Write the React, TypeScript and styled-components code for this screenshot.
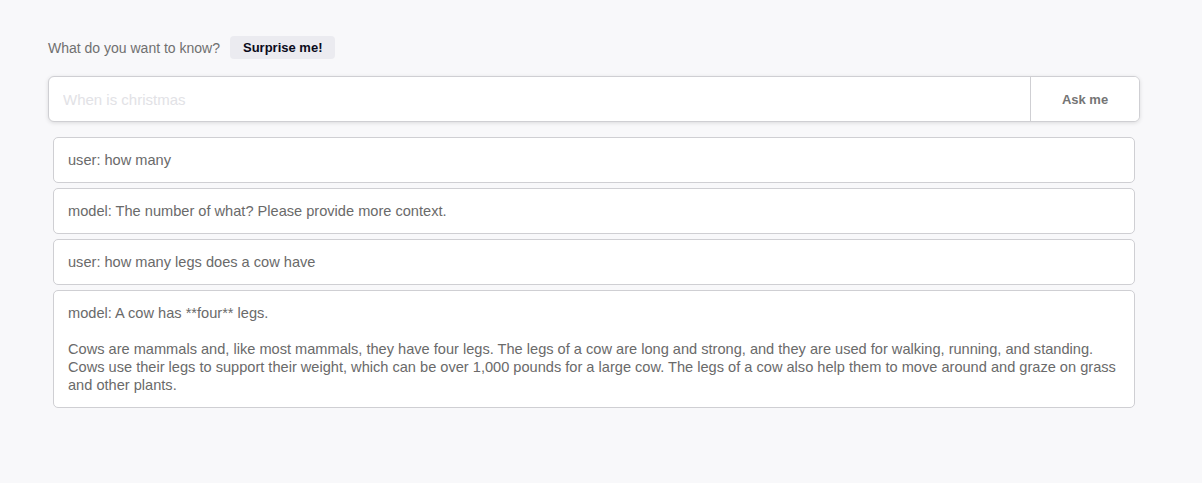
import React from "react";
import styled, { createGlobalStyle } from "styled-components";

const Global = createGlobalStyle`
  html, body { margin: 0; padding: 0; background: #f8f8fa; }
  body { font-family: "Liberation Sans", Arial, sans-serif; }
`;

const Page = styled.div`
  padding: 36px 62px 40px 48px;
`;

const TopRow = styled.div`
  display: flex;
  align-items: center;
  gap: 10px;
  height: 23px;
`;

const Label = styled.span`
  font-size: 14px;
  color: #707070;
`;

const SurpriseButton = styled.button`
  font-family: inherit;
  font-size: 13px;
  font-weight: 700;
  color: #0a0a1a;
  background: #ebebf0;
  border: none;
  border-radius: 4px;
  height: 23px;
  padding: 0 13px;
  cursor: pointer;
`;

const InputBox = styled.div`
  margin-top: 17px;
  display: flex;
  height: 46px;
  box-sizing: border-box;
  border: 1px solid #cfcfd3;
  border-radius: 6px;
  background: #fff;
  box-shadow: 0 1px 4px rgba(0, 0, 0, 0.12);
  overflow: hidden;
`;

const Input = styled.input`
  flex: 1;
  border: none;
  outline: none;
  font-family: inherit;
  font-size: 15px;
  padding: 0 14px;
  color: #555;
  background: transparent;
  &::placeholder { color: #e2e2e6; }
`;

const AskButton = styled.button`
  width: 109px;
  border: none;
  border-left: 1px solid #cfcfd3;
  background: #fff;
  font-family: inherit;
  font-size: 13px;
  font-weight: 700;
  color: #757575;
  cursor: pointer;
`;

const History = styled.div`
  margin: 15px 5px 0 5px;
  display: flex;
  flex-direction: column;
  gap: 5px;
`;

const Message = styled.div`
  background: #fff;
  border: 1px solid #cfcfd3;
  border-radius: 5px;
  padding: 13px 14px;
  font-size: 14.6px;
  line-height: 18px;
  color: #6a6a6a;
  white-space: pre-wrap;
`;

const messages = [
  "user: how many",
  "model: The number of what? Please provide more context.",
  "user: how many legs does a cow have",
  "model: A cow has **four** legs.\n\nCows are mammals and, like most mammals, they have four legs. The legs of a cow are long and strong, and they are used for walking, running, and standing. Cows use their legs to support their weight, which can be over 1,000 pounds for a large cow. The legs of a cow also help them to move around and graze on grass and other plants.",
];

export default function App() {
  return (
    <>
      <Global />
      <Page>
        <TopRow>
          <Label>What do you want to know?</Label>
          <SurpriseButton>Surprise me!</SurpriseButton>
        </TopRow>
        <InputBox>
          <Input placeholder="When is christmas" />
          <AskButton>Ask me</AskButton>
        </InputBox>
        <History>
          {messages.map((m, i) => (
            <Message key={i}>{m}</Message>
          ))}
        </History>
      </Page>
    </>
  );
}
